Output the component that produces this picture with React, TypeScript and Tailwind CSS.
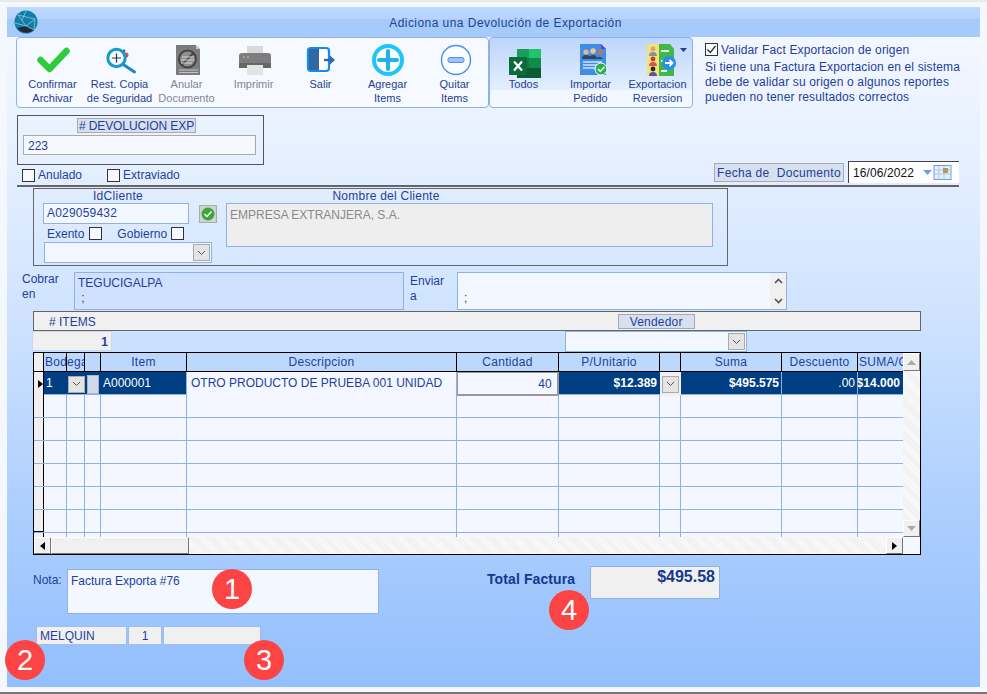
import React from "react";

const Check = ({ checked = false, cls = "" }: { checked?: boolean; cls?: string }) => (
  <span className={`inline-flex w-[13px] h-[13px] border border-[#333] bg-[#f6f9ff] shrink-0 items-center justify-center ${cls}`}>
    {checked && (
      <svg width="11" height="11" viewBox="0 0 11 11"><path d="M1.5 5.5 4.3 8.5 9.5 2" fill="none" stroke="#333" strokeWidth="1.3" /></svg>
    )}
  </span>
);

const Combo = () => (
  <span className="w-[17px] h-[17px] bg-[#e4e4e4] border border-[#aaa] flex items-center justify-center shrink-0">
    <svg width="9" height="6" viewBox="0 0 9 6"><path d="M1 1 4.5 4.5 8 1" fill="none" stroke="#555" strokeWidth="1" /></svg>
  </span>
);

const Icons: Record<string, React.ReactNode> = {
  check: <path d="M7.5 22 16.5 31 33.5 13" fill="none" stroke="#2ecb3c" strokeWidth="6.5" strokeLinecap="round" strokeLinejoin="round" />,
  rest: (
    <>
      <circle cx="26" cy="17" r="2.5" fill="#e8484f" />
      <circle cx="24" cy="13" r="1.4" fill="#555" />
      <path d="M24 27 34.5 34" stroke="#1c87c4" strokeWidth="3" strokeLinecap="round" />
      <circle cx="16.5" cy="20" r="8.7" fill="#f6fbff" stroke="#129cc9" strokeWidth="3" />
      <path d="M12 20H21M16.5 15.5V24.5" stroke="#333" strokeWidth="1.2" />
    </>
  ),
  anular: (
    <>
      <path d="M9 7H29L33 11V37H9Z" fill="#7c7c7c" />
      <path d="M29 7V11H33Z" fill="#c9c9c9" />
      <circle cx="20.5" cy="21" r="8.5" fill="#8e8e8e" stroke="#444" strokeWidth="2" />
      <path d="M14.5 27 26.5 15" stroke="#444" strokeWidth="2" />
      <path d="M15 19H27M14 22H27M14 25H25" stroke="#d8d8d8" strokeWidth="1" />
      <path d="M12 32H31M12 34.5H31" stroke="#c4c4c4" strokeWidth="1" />
    </>
  ),
  print: (
    <>
      <path d="M13 8H29V15H13Z" fill="#d9d9d9" />
      <path d="M8 15H34a3 3 0 0 1 3 3V30H5V18a3 3 0 0 1 3-3Z" fill="#7d7d7d" />
      <path d="M5 25H37V30H5Z" fill="#666" />
      <circle cx="10" cy="19" r="1" fill="#aaa" /><circle cx="14" cy="19" r="1" fill="#aaa" />
      <path d="M13 27H29V37H13Z" fill="#e3e3e3" />
    </>
  ),
  salir: (
    <>
      <rect x="7" y="10" width="21" height="23" rx="3" fill="#fff" stroke="#0f8cf5" strokeWidth="2.2" />
      <path d="M8 11H18V32H8Z" fill="#32689f" />
      <path d="M23 22H32" stroke="#32689f" strokeWidth="2.4" />
      <path d="M29 17.5 34 22 29 26.5Z" fill="#32689f" />
    </>
  ),
  add: (
    <>
      <circle cx="20" cy="22" r="14" fill="#fbfdff" stroke="#1fc4fb" strokeWidth="4" />
      <path d="M11 22H29M20 13V31" stroke="#1fb2ee" strokeWidth="4" strokeLinecap="round" />
    </>
  ),
  minus: (
    <>
      <circle cx="21" cy="22" r="14.5" fill="#fbfdff" stroke="#4d8ef5" strokeWidth="1.4" />
      <rect x="13" y="19.5" width="16" height="5" rx="2" fill="#9fc1f5" stroke="#4d8ef5" strokeWidth="1" />
    </>
  ),
  excel: (
    <>
      <path d="M13 11H37V40H13Z" fill="#107c41" />
      <path d="M25 11H37V20H25Z" fill="#21c36f" />
      <path d="M25 20H37V30H25Z" fill="#128a4c" />
      <path d="M13 30H37V40H13Z" fill="#0c5c31" />
      <path d="M13 11H25V20H13Z" fill="#1a9f5b" />
      <rect x="5" y="19" width="18" height="18" rx="1" fill="#0b6b39" />
      <path d="M10 23.5 18 32.5M18 23.5 10 32.5" stroke="#fff" strokeWidth="2.2" />
    </>
  ),
  import: (
    <>
      <path d="M9 6H30L35 11V37H9Z" fill="#3f8de8" />
      <path d="M30 6 35 11H30Z" fill="#7b3fc0" />
      <circle cx="15" cy="14" r="2.6" fill="#e9b48f" /><circle cx="22" cy="13" r="2.8" fill="#f0c58d" /><circle cx="29" cy="14" r="2.6" fill="#b77a55" />
      <path d="M11 21a4 4 0 0 1 8 0ZM18 21a4 4 0 0 1 8 0ZM25 21a4 4 0 0 1 7 0Z" fill="#30475f" />
      <path d="M12 24H31M12 27H31M12 30H26" stroke="#cfe5ff" strokeWidth="1.3" />
      <circle cx="30" cy="31" r="6" fill="#27b24b" stroke="#fff" strokeWidth="1" />
      <path d="M27 31 29.4 33.4 33.4 28.8" fill="none" stroke="#fff" strokeWidth="1.6" />
    </>
  ),
  export: (
    <>
      <rect x="9" y="6" width="12" height="32" fill="#f3e27a" />
      <path d="M21 6H32L36 11V38H21Z" fill="#3fb84a" />
      <circle cx="15" cy="11" r="2.4" fill="#d9a27f" /><path d="M11 18a4 4 0 0 1 8 0Z" fill="#8a8f9a" />
      <circle cx="15" cy="21" r="2.4" fill="#c2413a" /><path d="M11 28a4 4 0 0 1 8 0Z" fill="#d8544a" />
      <circle cx="15" cy="31" r="2.4" fill="#2a2a2a" /><path d="M11 38a4 4 0 0 1 8 0Z" fill="#6a4aa0" />
      <path d="M23 13H31M23 23H29M23 33H29" stroke="#e8f7e8" strokeWidth="2" />
      <circle cx="31" cy="25" r="7" fill="#2b8fe8" />
      <path d="M27 25H34M31.5 22 34.5 25 31.5 28" fill="none" stroke="#fff" strokeWidth="1.8" />
    </>
  ),
};

const ToolBtn = ({ icon, lines, dim = false, children }: { icon: string; lines: string[]; dim?: boolean; children?: React.ReactNode }) => (
  <div className="w-[67px] flex flex-col items-center relative shrink-0">
    <svg width="40" height="39" viewBox="0 0 40 39" className="overflow-visible block">{Icons[icon]}</svg>
    <div className={`text-[11px] leading-[14px] text-center whitespace-nowrap ${dim ? "text-[#7f8791]" : "text-[#1f3f8f]"}`}>
      {lines.map((l) => <div key={l}>{l}</div>)}
    </div>
    {children}
  </div>
);

const cols = "grid grid-cols-[10px_23px_18px_16px_86px_270px_102px_101px_21px_101px_76px_45px]";
const heads = ["", "Bod", "ega", "", "Item", "Descripcion", "Cantidad", "P/Unitario", "", "Suma", "Descuento", "SUMA/C"];

const Badge = ({ n, cls }: { n: number; cls: string }) => (
  <div className={`absolute w-[40px] h-[40px] rounded-full bg-[#fc4445] text-white text-[29px] leading-[40px] text-center ${cls}`}>{n}</div>
);

const hatch = "bg-[#f4f4f4] bg-[repeating-linear-gradient(45deg,#efefef_0,#efefef_1px,#fbfbfb_1px,#fbfbfb_2px)]";

export default function App() {
  return (
    <div className="relative w-[987px] h-[694px] bg-[#f4f7fb] border-t-2 border-t-[#e9e9e9] border-b-2 border-b-[#777] pt-[5px] px-[7px] overflow-hidden text-[#1f3f9a] text-[12px] [font-family:'Liberation_Sans',Arial,sans-serif]">
      <div className="w-[973px] h-[680px] flex flex-col bg-[linear-gradient(180deg,#f6f9ff_0%,#e6f0ff_22%,#cfe3ff_45%,#afd0fe_72%,#93bffd_100%)]">
        {/* title */}
        <div className="h-[30px] shrink-0 flex items-center justify-center relative pt-[1px] bg-[linear-gradient(180deg,#bcd9fe_0%,#b5d3fd_40%,#a6caf9_42%,#a6caf9_100%)] text-[12px] tracking-[0.45px] text-[#1f4590]">
          <svg width="24" height="24" viewBox="0 0 24 24" className="absolute left-[7px] top-[3px]">
            <circle cx="12" cy="12" r="11.5" fill="#0f7fa8" />
            <path d="M3 18a12 12 0 0 0 17 2L12 16Z" fill="#1f2b3a" />
            <path d="M4 5 12 16 20 20M4 5 21 9 12 16M12 1 8 10M21 9 20 20M1 13 12 16" fill="none" stroke="#bcdbe8" strokeWidth="0.6" />
          </svg>
          <span className="ml-[24px]">Adiciona una Devolución de Exportación</span>
        </div>

        {/* toolbar row */}
        <div className="flex h-[71px] shrink-0 pl-[9px]">
          <div className="w-[473px] flex pl-[2px] rounded-[4px] border border-[#8fb2e6] bg-[#f6f9ff]">
            <ToolBtn icon="check" lines={["Confirmar", "Archivar"]} />
            <ToolBtn icon="rest" lines={["Rest. Copia", "de Seguridad"]} />
            <ToolBtn icon="anular" lines={["Anular", "Documento"]} dim />
            <ToolBtn icon="print" lines={["Imprimir"]} dim />
            <ToolBtn icon="salir" lines={["Salir"]} />
            <ToolBtn icon="add" lines={["Agregar", "Items"]} />
            <ToolBtn icon="minus" lines={["Quitar", "Items"]} />
          </div>
          <div className="w-[204px] flex rounded-[4px] border border-[#8fb2e6] bg-[linear-gradient(180deg,#bcd6fb_0%,#e4effe_76%,#f1f6ff_76%,#f4f8ff_100%)]">
            <ToolBtn icon="excel" lines={["Todos"]} />
            <ToolBtn icon="import" lines={["Importar", "Pedido"]} />
            <ToolBtn icon="export" lines={["Exportacion", "Reversion"]}>
              <svg width="7" height="4" viewBox="0 0 7 4" className="absolute right-[4px] top-[10px]"><path d="M0 0H7L3.5 4Z" fill="#1f3f8f" /></svg>
            </ToolBtn>
          </div>
          <div className="ml-[12px] pt-[6px] tracking-[0.15px] text-[#1f3f9a]">
            <div className="flex items-center gap-[3px] h-[13px]"><Check checked /><span className="whitespace-nowrap">Validar Fact Exportacion de origen</span></div>
            <div className="mt-[4px] leading-[15px] whitespace-nowrap">
              <div>Si tiene una Factura Exportacion en el sistema</div>
              <div>debe de validar su origen o algunos reportes</div>
              <div>pueden no tener resultados correctos</div>
            </div>
          </div>
        </div>

        {/* devolucion */}
        <div className="ml-[10px] mt-[7px] w-[247px] h-[50px] shrink-0 border border-[#555] flex flex-col items-start">
          <div className="mt-[2px] ml-[59px] h-[15px] w-[119px] bg-[#d6e0ee] border border-[#aaa] leading-[14px] text-center text-[12px] tracking-[-0.1px]">
            # DEVOLUCION EXP
          </div>
          <div className="mt-[2px] ml-[5px] w-[233px] h-[20px] bg-[#f5f8ff] border border-[#aaa] pl-[4px] leading-[20px]">223</div>
        </div>

        {/* check row */}
        <div className="flex items-center h-[22px] shrink-0 pl-[5px] border-b-2 border-b-[#666] w-[942px] ml-[10px]">
          <Check />
          <span className="ml-[3px]">Anulado</span>
          <Check cls="ml-[25px]" />
          <span className="ml-[3px]">Extraviado</span>
          <div className="ml-auto flex items-start self-start mt-[-2px]">
            <div className="w-[130px] h-[19px] bg-[#d6e0ee] border border-[#aaa] text-center leading-[18px] tracking-[0.3px]">Fecha de&nbsp; Documento</div>
            <div className="ml-[4px] w-[111px] h-[22px] mt-[-2px] bg-white border-l border-t border-l-[#444] border-t-[#444] flex items-center pl-[4px] text-[#111]">
              <span className="tracking-[0.1px]">16/06/2022</span>
              <svg width="32" height="15" viewBox="0 0 32 15" className="ml-[9px]">
                <path d="M0 5H9L4.5 10Z" fill="#6f9ee8" />
                <rect x="11" y="0.5" width="17" height="14" fill="#e6eefb" stroke="#6f9ee8" />
                <path d="M11 5H28M11 9H28M16 1V14M21 1V14" stroke="#9dbdf0" strokeWidth="0.8" />
                <rect x="20" y="3" width="5" height="5" fill="#b09a55" />
              </svg>
            </div>
          </div>
        </div>

        {/* cliente */}
        <div className="ml-[26px] mt-[1px] w-[695px] h-[78px] shrink-0 border border-[#666] flex pl-[9px]">
          <div className="w-[183px] shrink-0">
            <div className="h-[14px] leading-[15px] text-center w-[150px] tracking-[0.3px]">IdCliente</div>
            <div className="flex items-center">
              <div className="w-[146px] h-[21px] bg-[#f3f7ff] border border-[#8fb2e6] pl-[3px] leading-[19px] tracking-[0.2px]">A029059432</div>
              <div className="ml-[10px] w-[18px] h-[18px] bg-[#cfd3d8] border border-[#aaa] flex items-center justify-center">
                <svg width="14" height="14" viewBox="0 0 14 14"><circle cx="7" cy="7" r="6.5" fill="#3da53a" /><path d="M3.5 7 6 9.5 10.5 4.5" fill="none" stroke="#fff" strokeWidth="1.5" /></svg>
              </div>
            </div>
            <div className="flex items-center h-[17px] pl-[4px] mt-[1px]">
              <span>Exento</span><Check cls="ml-[5px]" />
              <span className="ml-[15px] tracking-[0.05px]">Gobierno</span><Check cls="ml-[4px]" />
            </div>
            <div className="ml-[1px] w-[168px] h-[21px] bg-[#f3f7ff] border border-[#8fb2e6] flex items-center justify-end pr-[1px]"><Combo /></div>
          </div>
          <div className="flex-1">
            <div className="h-[14px] leading-[15px] text-center w-[320px] tracking-[0.25px]">Nombre del Cliente</div>
            <div className="w-[487px] h-[44px] bg-[#eeeeee] border border-[#8fb2e6] pl-[3px] pt-[2px] text-[#8a8a8a]">EMPRESA EXTRANJERA, S.A.</div>
          </div>
        </div>

        {/* cobrar */}
        <div className="flex h-[38px] shrink-0 mt-[6px] ml-[15px]">
          <div className="w-[52px] leading-[15px]">Cobrar<br />en</div>
          <div className="w-[330px] bg-[#cfe1fe] border border-[#8fb2e6] pl-[3px] pt-[3px] leading-[15px]">TEGUCIGALPA<br />&nbsp;;</div>
          <div className="ml-[6px] w-[47px] leading-[15px] pt-[2px]">Enviar<br />a</div>
          <div className="w-[330px] bg-[#f3f7ff] border border-[#8fb2e6] pl-[6px] pt-[18px] leading-[15px] flex justify-between pr-0">
            <span>;</span>
            <div className="w-[16px] h-[36px] -mt-[18px] bg-[#f0f0f0] flex flex-col justify-between items-center py-[5px]">
              <svg width="9" height="6" viewBox="0 0 9 6"><path d="M1 5 4.5 1.5 8 5" fill="none" stroke="#555" strokeWidth="1.6" /></svg>
              <svg width="9" height="6" viewBox="0 0 9 6"><path d="M1 1 4.5 4.5 8 1" fill="none" stroke="#555" strokeWidth="1.6" /></svg>
            </div>
          </div>
        </div>

        {/* items bar */}
        <div className="ml-[26px] mt-[1px] w-[888px] h-[20px] shrink-0 bg-[#f0f0f0] border border-[#666] flex items-center">
          <span className="ml-[15px] mt-[1px]"># ITEMS</span>
          <span className="ml-[522px] w-[77px] h-[15px] bg-[#d6e0ee] border border-[#aaa] text-center leading-[14px] tracking-[0.2px]">Vendedor</span>
        </div>
        <div className="flex h-[21px] shrink-0 ml-[25px]">
          <div className="w-[80px] h-[20px] bg-[#f0f0f0] border border-[#c9d8ee] text-right pr-[3px] font-bold leading-[20px]">1</div>
          <div className="ml-[453px] w-[182px] h-[21px] bg-[#f3f7ff] border border-[#8fb2e6] flex items-center justify-end pr-[1px]"><Combo /></div>
        </div>

        {/* grid */}
        <div className="ml-[26px] w-[888px] h-[203px] shrink-0 border border-black bg-[#f4f7ff] flex flex-col overflow-hidden">
          <div className="flex h-[184px] shrink-0">
            <div className="w-[869px] overflow-hidden">
              <div className={`${cols} h-[19px] border-b border-black`}>
                {heads.map((h, i) => (
                  <div key={i} className={`${i === 0 ? "bg-[#f0f0f0]" : "bg-[#bcd9fd]"} border-r border-black leading-[19px] overflow-hidden whitespace-nowrap last:border-r-0 ${i === 1 ? "pl-[1px]" : i === 2 ? "pl-[0px]" : i === 11 ? "pl-[1px]" : "text-center"} tracking-[0.3px]`}>
                    {h}
                  </div>
                ))}
              </div>
              <div className={`${cols} h-[23px] border-b border-[#8fb2e6] bg-[#003f82] text-white`}>
                <div className="bg-[#f0f0f0] border-r border-black flex items-center justify-end"><svg width="5" height="8" viewBox="0 0 5 8"><path d="M0 0 5 4 0 8Z" fill="#000" /></svg></div>
                <div className="pl-[2px] leading-[22px]">1</div>
                <div className="flex items-center justify-center"><Combo /></div>
                <div className="flex items-center justify-center"><span className="w-[12px] h-[19px] bg-[#cfd9e8] border border-[#aab4c2]" /></div>
                <div className="pl-[2px] leading-[22px] border-r border-[#8fb2e6]">A000001</div>
                <div className="bg-[#f4f7ff] text-[#1f3f9a] pl-[4px] leading-[22px] whitespace-nowrap border-r border-[#8fb2e6]">OTRO PRODUCTO DE PRUEBA 001 UNIDAD</div>
                <div className="bg-[#f4f7ff] text-[#1f3f9a] text-right pr-[5px] pt-[2px] leading-[19px] border border-[#999] border-r-2 border-b-2 tracking-[0.2px]">40</div>
                <div className="text-right pr-[3px] font-bold leading-[22px]">$12.389</div>
                <div className="flex items-center justify-center bg-[#f0f0f0]"><Combo /></div>
                <div className="text-right pr-[2px] font-bold leading-[22px] border-r border-[#8fb2e6]">$495.575</div>
                <div className="text-right pr-[2px] leading-[22px] border-r border-[#8fb2e6]">.00</div>
                <div className="font-bold leading-[22px] whitespace-nowrap overflow-hidden flex justify-end pr-[3px]">$14.000</div>
              </div>
              {[0, 1, 2, 3, 4, 5, 6].map((r) => (
                <div key={r} className={`${cols} h-[23px] border-b border-[#8fb2e6]`}>
                  {heads.map((_, i) => (
                    <div key={i} className={i === 0 ? `bg-[#f0f0f0] border-r border-black ${r === 5 ? "border-b border-b-black" : ""}` : i === 11 ? "" : "border-r border-[#8fb2e6]"} />
                  ))}
                </div>
              ))}
            </div>
            <div className={`w-[17px] flex flex-col justify-between ${hatch}`}>
              <div className="h-[18px] bg-[#f0f0f0] border border-white border-r-[#777] border-b-[#777] flex items-center justify-center"><svg width="9" height="5" viewBox="0 0 9 5"><path d="M0 5 4.5 0 9 5Z" fill="#aaa" /></svg></div>
              <div className="h-[17px] bg-[#f0f0f0] border border-white border-r-[#777] border-b-[#777] flex items-center justify-center"><svg width="9" height="5" viewBox="0 0 9 5"><path d="M0 0H9L4.5 5Z" fill="#aaa" /></svg></div>
            </div>
          </div>
          <div className="flex h-[17px] shrink-0">
            <div className="w-[17px] bg-[#f0f0f0] border border-white border-r-[#777] border-b-[#777] flex items-center justify-center"><svg width="5" height="8" viewBox="0 0 5 8"><path d="M5 0V8L0 4Z" fill="#000" /></svg></div>
            <div className="w-[138px] bg-[#f0f0f0] border border-white border-r-[#777] border-b-[#777]" />
            <div className={`w-[697px] ${hatch}`} />
            <div className="w-[17px] bg-[#f0f0f0] border border-white border-r-[#777] border-b-[#777] flex items-center justify-center"><svg width="5" height="8" viewBox="0 0 5 8"><path d="M0 0V8L5 4Z" fill="#000" /></svg></div>
          </div>
        </div>

        {/* nota */}
        <div className="flex mt-[14px] ml-[26px] shrink-0 h-[45px]">
          <div className="w-[34px] pt-[2px]">Nota:</div>
          <div className="w-[312px] h-[45px] bg-[#f3f7ff] border border-[#8fb2e6] pl-[3px] pt-[2px] text-[#1f3f9a]">Factura Exporta #76</div>
          <div className="ml-[108px] w-[92px] font-bold text-[14px] text-[#16388f] pt-[2px] whitespace-nowrap leading-[17px] tracking-[0.1px]">Total Factura</div>
          <div className="ml-[11px] w-[130px] h-[33px] mt-[-3px] bg-[#f0f0f0] border border-[#8fb2e6] text-right pr-[4px] font-bold text-[16px] leading-[19px] text-[#16388f]">$495.58</div>
        </div>
        <div className="flex mt-[12px] ml-[29px] gap-[1px] shrink-0 h-[19px]">
          <div className="w-[91px] bg-[#f0f0f0] border border-[#9dbdee] pl-[3px] leading-[18px]">MELQUIN</div>
          <div className="w-[34px] bg-[#f0f0f0] border border-[#9dbdee] text-center leading-[18px]">1</div>
          <div className="w-[98px] bg-[#f0f0f0] border border-[#9dbdee]" />
        </div>
      </div>
      <Badge n={1} cls="left-[212px] top-[567px]" />
      <Badge n={2} cls="left-[5px] top-[638px]" />
      <Badge n={3} cls="left-[244px] top-[638px]" />
      <Badge n={4} cls="left-[549px] top-[588px]" />
    </div>
  );
}
